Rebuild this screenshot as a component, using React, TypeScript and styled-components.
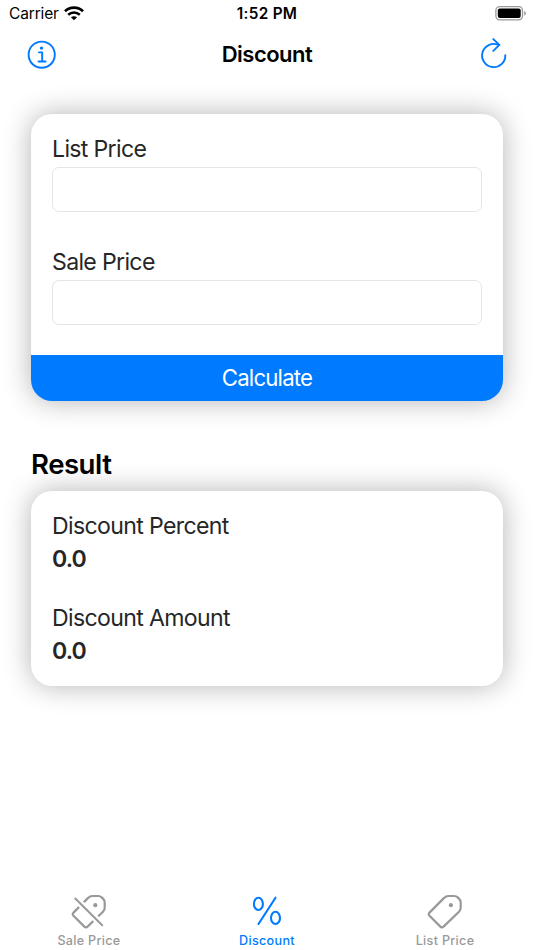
import React, { useState } from "react";
import styled, { createGlobalStyle } from "styled-components";

const BLUE = "#007aff";
const GRAY = "#999999";

const GlobalStyle = createGlobalStyle`
  * { box-sizing: border-box; }
  body {
    margin: 0;
    background: #fff;
    font-family: Inter, "Liberation Sans", sans-serif;
    color: #000;
  }
`;

const Screen = styled.div`
  width: 534px;
  height: 950px;
  display: flex;
  flex-direction: column;
  overflow: hidden;
  background: #fff;
`;

const StatusBar = styled.div`
  height: 28px;
  display: grid;
  grid-template-columns: 1fr auto 1fr;
  align-items: center;
  padding: 0 7px 0 9px;
`;

const Carrier = styled.div`
  display: flex;
  align-items: center;
  gap: 5px;
  font-size: 15.5px;
  line-height: 28px;
  letter-spacing: -0.15px;
`;

const Clock = styled.div`
  margin-left: -2px;
  font-size: 15.3px;
  line-height: 28px;
  font-weight: 600;
  letter-spacing: 0.3px;
`;

const BatterySlot = styled.div`
  display: flex;
  justify-content: flex-end;
`;

const NavBar = styled.header`
  height: 54px;
  display: grid;
  grid-template-columns: 1fr auto 1fr;
  align-items: center;
  padding: 0 26px;
`;

const NavTitle = styled.h1`
  margin: 0;
  padding-bottom: 2px;
  font-size: 22px;
  line-height: 52px;
  font-weight: 600;
  letter-spacing: -0.5px;
`;

const IconButton = styled.button<{ $end?: boolean }>`
  justify-self: ${(p) => (p.$end ? "end" : "start")};
  display: flex;
  padding: 0;
  border: 0;
  background: none;
  color: ${BLUE};
`;

const Content = styled.main`
  flex: 1;
  display: flex;
  flex-direction: column;
  padding: 32px 31px 0;
`;

const Card = styled.section`
  border-radius: 21px;
  background: #fff;
  box-shadow: 0 0 28px rgba(0, 0, 0, 0.3);
  overflow: hidden;
`;

const Fields = styled.div`
  display: flex;
  flex-direction: column;
  gap: 34px;
  height: 241px;
  padding: 19px 21px 0;
`;

const Field = styled.label`
  display: flex;
  flex-direction: column;
`;

const FieldLabel = styled.span`
  height: 34px;
  font-size: 23.1px;
  line-height: 32px;
  letter-spacing: -0.67px;
  color: #262626;
`;

const Input = styled.input`
  width: 100%;
  height: 45px;
  padding: 0 10px;
  border: 1px solid #e5e5e5;
  border-radius: 7px;
  background: #fff;
  font: inherit;
  font-size: 23px;
  outline: none;
`;

const CalculateButton = styled.button`
  display: block;
  width: 100%;
  height: 46px;
  padding: 0;
  border: 0;
  background: ${BLUE};
  color: #fff;
  font: inherit;
  font-size: 22.2px;
  line-height: 46px;
  letter-spacing: -0.8px;
`;

const SectionTitle = styled.h2`
  margin: 46px 0 9px;
  font-size: 27.6px;
  line-height: 35px;
  font-weight: 600;
  letter-spacing: -0.5px;
`;

const Results = styled.div`
  display: flex;
  flex-direction: column;
  gap: 26px;
  height: 195px;
  padding: 19px 21px 0;
`;

const Result = styled.div`
  height: 66px;
  font-size: 23.1px;
  line-height: 33px;
  letter-spacing: -0.65px;
  color: #262626;
`;

const ResultValue = styled.div`
  font-weight: 600;
  letter-spacing: -0.9px;
`;

const TabBar = styled.nav`
  height: 65px;
  display: grid;
  grid-template-columns: repeat(3, 1fr);
`;

const Tab = styled.button<{ $active: boolean }>`
  display: flex;
  flex-direction: column;
  align-items: center;
  padding: 8px 0 0;
  border: 0;
  background: none;
  font: inherit;
  font-size: 12.6px;
  font-weight: 500;
  line-height: 16px;
  letter-spacing: 0.3px;
  color: ${(p) => (p.$active ? BLUE : GRAY)};
  svg { margin-bottom: 2px; }
`;

const WifiIcon = () => (
  <svg width="20" height="17" viewBox="0 0 20 17" fill="none" stroke="#000">
    <path d="M1 5.2C6 .5 14 .5 19 5.2" strokeWidth="2.7" />
    <path d="M4.2 8.7C7.6 5.7 12.4 5.7 15.8 8.7" strokeWidth="2.5" />
    <path d="M10 14.2L6.9 11.3C8.7 9.8 11.3 9.8 13.1 11.3Z" fill="#000" stroke="none" />
  </svg>
);

const BatteryIcon = () => (
  <svg width="32" height="16" viewBox="0 0 32 16">
    <rect x=".9" y=".7" width="26.6" height="13.2" rx="3.8" fill="none" stroke="#999" strokeWidth="1.3" />
    <rect x="2.8" y="2.6" width="22.9" height="9.4" rx="2" fill="#000" />
    <path d="M29.2 5c2.2.6 2.2 4 0 4.6z" fill="#999" />
  </svg>
);

const InfoIcon = () => (
  <svg width="31" height="32" viewBox="0 0 31 32" fill="none" stroke="currentColor">
    <circle cx="15.7" cy="15.7" r="13.1" strokeWidth="1.9" />
    <circle cx="15.5" cy="9.1" r="1.7" fill="currentColor" stroke="none" />
    <path d="M13 13.4h3.2v9.1M12.5 22.5h7.1" strokeWidth="1.9" strokeLinecap="round" strokeLinejoin="round" />
  </svg>
);

const ReloadIcon = () => (
  <svg width="28" height="34" viewBox="0 0 28 34" fill="none" stroke="currentColor" strokeWidth="1.9" strokeLinecap="round" strokeLinejoin="round">
    <path d="M25.3 17.2A11.6 11.6 0 1 1 18.4 6.9" />
    <path d="M13.3 1.1L19.4 6.9L13.3 12.9" />
  </svg>
);

const TAG = "M3.5 19.6L18.1 4.9Q19.9 3 22.5 3H28.2Q30.3 3 31.7 4.4L33.2 5.9Q34.7 7.4 34.7 9.5V14.8Q34.7 17.1 33 18.8L17.8 33.4Q15.9 35.2 14.1 33.4L3.5 22.8Q1.9 21.2 3.5 19.6Z";

const TagIcon = () => (
  <svg width="38" height="38" viewBox="0 0 38 38" fill="none" stroke="currentColor" strokeWidth="2.2">
    <path d={TAG} />
    <circle cx="24.9" cy="12.2" r="2.1" fill="currentColor" stroke="none" />
  </svg>
);

const TagSlashIcon = () => (
  <svg width="38" height="38" viewBox="0 0 38 38" fill="none" stroke="currentColor" strokeWidth="2.2">
    <path d={TAG} />
    <circle cx="25.3" cy="12.2" r="2.1" fill="currentColor" stroke="none" />
    <path d="M5.3 5.5L32.2 32.2" stroke="#fff" strokeWidth="6.8" />
    <path d="M5.3 5.5L32.2 32.2" strokeWidth="2" strokeLinecap="round" />
  </svg>
);

const PercentIcon = () => (
  <svg width="38" height="38" viewBox="0 0 38 38" fill="none" stroke="currentColor" strokeWidth="2.1" strokeLinecap="round">
    <ellipse cx="10.4" cy="10.9" rx="4.5" ry="6.1" />
    <ellipse cx="27.5" cy="24.9" rx="4.5" ry="6.1" />
    <path d="M27.5 4.7L10.5 31" />
  </svg>
);

const TABS = [
  { name: "Sale Price", Icon: TagSlashIcon },
  { name: "Discount", Icon: PercentIcon },
  { name: "List Price", Icon: TagIcon },
];

export default function App() {
  const [tab, setTab] = useState("Discount");
  const [list, setList] = useState("");
  const [sale, setSale] = useState("");
  const [amount, setAmount] = useState(0);
  const [percent, setPercent] = useState(0);

  const calculate = () => {
    const l = Number(list) || 0;
    const s = Number(sale) || 0;
    setAmount(l - s);
    setPercent(l ? ((l - s) / l) * 100 : 0);
  };

  const reset = () => {
    setList("");
    setSale("");
    setAmount(0);
    setPercent(0);
  };

  return (
    <Screen>
      <GlobalStyle />
      <StatusBar>
        <Carrier>Carrier<WifiIcon /></Carrier>
        <Clock>1:52 PM</Clock>
        <BatterySlot><BatteryIcon /></BatterySlot>
      </StatusBar>
      <NavBar>
        <IconButton aria-label="Info"><InfoIcon /></IconButton>
        <NavTitle>Discount</NavTitle>
        <IconButton $end aria-label="Reset" onClick={reset}><ReloadIcon /></IconButton>
      </NavBar>
      <Content>
        <Card>
          <Fields>
            <Field>
              <FieldLabel>List Price</FieldLabel>
              <Input value={list} onChange={(e) => setList(e.target.value)} />
            </Field>
            <Field>
              <FieldLabel>Sale Price</FieldLabel>
              <Input value={sale} onChange={(e) => setSale(e.target.value)} />
            </Field>
          </Fields>
          <CalculateButton onClick={calculate}>Calculate</CalculateButton>
        </Card>
        <SectionTitle>Result</SectionTitle>
        <Card>
          <Results>
            <Result>
              Discount Percent
              <ResultValue>{percent.toFixed(1)}</ResultValue>
            </Result>
            <Result>
              Discount Amount
              <ResultValue>{amount.toFixed(1)}</ResultValue>
            </Result>
          </Results>
        </Card>
      </Content>
      <TabBar>
        {TABS.map(({ name, Icon }) => (
          <Tab key={name} $active={tab === name} onClick={() => setTab(name)}>
            <Icon />
            {name}
          </Tab>
        ))}
      </TabBar>
    </Screen>
  );
}
